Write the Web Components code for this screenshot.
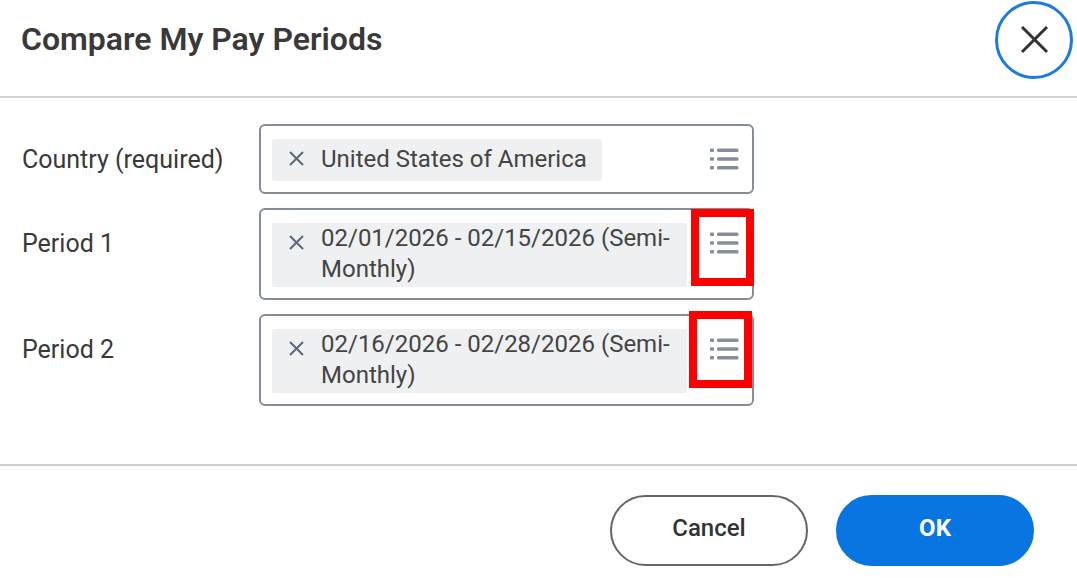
<!DOCTYPE html>
<html lang="en">
<head>
<meta charset="utf-8">
<meta name="viewport" content="width=device-width, initial-scale=1">
<title>Compare My Pay Periods</title>
<style>
  body {
    margin: 0;
    background: #fff;
    color: #393939;
    font-family: Roboto, "Liberation Sans", sans-serif;
  }
</style>
</head>
<body>
<pay-dialog heading="Compare My Pay Periods">
  <prompt-field label="Country (required)" value="United States of America"></prompt-field>
  <prompt-field label="Period 1" value="02/01/2026 - 02/15/2026 (Semi-Monthly)"></prompt-field>
  <prompt-field label="Period 2" value="02/16/2026 - 02/28/2026 (Semi-Monthly)"></prompt-field>
  <pill-button slot="actions">Cancel</pill-button>
  <pill-button slot="actions" primary>OK</pill-button>
  <callout-box slot="callouts" x="691" y="209"></callout-box>
  <callout-box slot="callouts" x="689" y="311"></callout-box>
</pay-dialog>

<script>
class PayDialog extends HTMLElement {
  constructor() {
    super();
    this.attachShadow({ mode: 'open' });
  }

  connectedCallback() {
    this.shadowRoot.innerHTML = `
      <style>
        :host {
          display: block;
          position: relative;
        }
        header {
          display: flex;
          align-items: center;
          justify-content: space-between;
          padding: 1px 4px 17px 21px;
          border-bottom: 2px solid #ced3d9;
        }
        h1 {
          margin: 0;
          padding-bottom: 2px;
          font-size: 32px;
          line-height: 36px;
          font-weight: 600;
        }
        .close {
          display: flex;
          align-items: center;
          justify-content: center;
          box-sizing: border-box;
          width: 78px;
          height: 78px;
          padding: 0;
          border: 3px solid #1f7ae0;
          border-radius: 50%;
          background: #fff;
          cursor: pointer;
        }
        .fields {
          display: flex;
          flex-direction: column;
          gap: 14px;
          padding: 26px 22px 58px;
        }
        footer {
          display: flex;
          justify-content: flex-end;
          gap: 28px;
          padding: 29px 43px 12px;
          border-top: 2px solid #cecece;
        }
      </style>
      <header>
        <h1>${this.getAttribute('heading')}</h1>
        <button class="close" type="button" aria-label="Close">
          <svg width="30" height="28" viewBox="0 0 30 28" fill="none" stroke="#333" stroke-width="3">
            <path d="M3 1l25 25M28 1L3 26"/>
          </svg>
        </button>
      </header>
      <div class="fields"><slot></slot></div>
      <footer><slot name="actions"></slot></footer>
      <slot name="callouts"></slot>
    `;
  }
}

class PromptField extends HTMLElement {
  constructor() {
    super();
    this.attachShadow({ mode: 'open' });
  }

  connectedCallback() {
    const value = this.getAttribute('value');

    this.shadowRoot.innerHTML = `
      <style>
        :host {
          display: grid;
          grid-template-columns: 237px minmax(0, 495px);
        }
        label {
          padding-top: 20px;
          font-size: 25px;
          line-height: 32px;
        }
        .box {
          display: flex;
          align-items: flex-start;
          justify-content: space-between;
          box-sizing: border-box;
          padding: 13px 10px 11px 11px;
          border: 2px solid #858d97;
          border-radius: 6px;
        }
        .chip {
          display: flex;
          align-items: flex-start;
          box-sizing: border-box;
          max-width: 415px;
          padding-right: 15px;
          border-radius: 3px;
          background: #eff0f2;
          color: #444;
          font-size: 24px;
          line-height: 31px;
        }
        .text {
          padding-bottom: 2px;
        }
        .chip.short {
          align-items: center;
        }
        button {
          display: flex;
          align-items: center;
          justify-content: center;
          flex: none;
          height: 42px;
          padding: 0 0 2px;
          border: 0;
          background: none;
          cursor: pointer;
        }
        .remove {
          width: 49px;
        }
        .list {
          width: 36px;
        }
      </style>
      <label for="prompt">${this.getAttribute('label')}</label>
      <div class="box">
        <div class="chip ${value.length < 30 ? 'short' : ''}">
          <button class="remove" type="button" aria-label="Remove ${value}">
            <svg width="16" height="16" viewBox="0 0 16 16" fill="none" stroke="#5b6877" stroke-width="2">
              <path d="M1 1l13 13M14 1L1 14"/>
            </svg>
          </button>
          <span class="text">${value}</span>
        </div>
        <button class="list" id="prompt" type="button">
          <svg width="30" height="24" viewBox="0 0 30 24" fill="#858d97">
            <rect x="1" y="1.5" width="4" height="3.5" rx="1"/>
            <rect x="1" y="10.2" width="4" height="3.5" rx="1"/>
            <rect x="1" y="19" width="4" height="3.5" rx="1"/>
            <rect x="8" y="1.5" width="21.5" height="3.5" rx="1.5"/>
            <rect x="8" y="10.2" width="21.5" height="3.5" rx="1.5"/>
            <rect x="8" y="19" width="21.5" height="3.5" rx="1.5"/>
          </svg>
        </button>
      </div>
    `;
  }
}

class PillButton extends HTMLElement {
  constructor() {
    super();
    this.attachShadow({ mode: 'open' });
    this.shadowRoot.innerHTML = `
      <style>
        :host {
          display: block;
        }
        button {
          box-sizing: border-box;
          min-width: 198px;
          height: 71px;
          padding: 0 24px 4px;
          border: 2px solid #666;
          border-radius: 36px;
          background: #fff;
          color: #333;
          font: 500 24px/31px Roboto, "Liberation Sans", sans-serif;
          cursor: pointer;
        }
        :host([primary]) button {
          border-color: #0875e1;
          background: #0875e1;
          color: #fff;
          font-weight: 700;
        }
      </style>
      <button type="button"><slot></slot></button>
    `;
  }
}

// Red outline drawn over the dialog to point at a control
class CalloutBox extends HTMLElement {
  constructor() {
    super();
    this.attachShadow({ mode: 'open' });
  }

  connectedCallback() {
    this.shadowRoot.innerHTML = `
      <style>
        :host {
          display: block;
          position: absolute;
          left: ${this.getAttribute('x')}px;
          top: ${this.getAttribute('y')}px;
          box-sizing: border-box;
          width: 63px;
          height: 77px;
          border: 8px solid #f00;
          pointer-events: none;
        }
      </style>
    `;
  }
}

customElements.define('pay-dialog', PayDialog);
customElements.define('prompt-field', PromptField);
customElements.define('pill-button', PillButton);
customElements.define('callout-box', CalloutBox);
</script>
</body>
</html>
